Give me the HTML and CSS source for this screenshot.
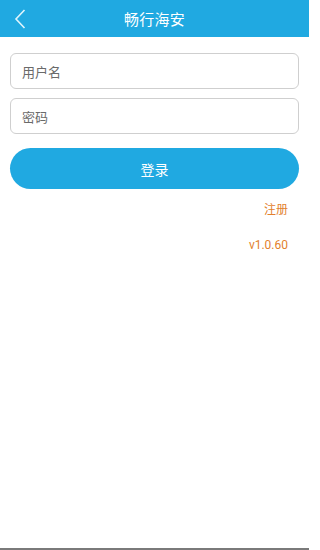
FILE: index.html
```html
<!DOCTYPE html>
<html lang="zh">
<head>
<meta charset="utf-8">
<meta name="viewport" content="width=309">
<title>畅行海安</title>
<link rel="stylesheet" href="styles.css">
</head>
<body>
<div class="page">
  <header class="topbar">
    <span class="back">
      <svg width="12" height="20" viewBox="0 0 12 20"><path d="M10.5 1 L2 10 L10.5 19" fill="none" stroke="#dff4fc" stroke-width="1.6"/></svg>
    </span>
    <h1 class="title">畅行海安</h1>
  </header>
  <main class="content">
    <div class="field"><span class="placeholder">用户名</span></div>
    <div class="field"><span class="placeholder">密码</span></div>
    <button class="login">登录</button>
    <div class="links">
      <span class="register">注册</span>
      <span class="version">v1.0.60</span>
    </div>
  </main>
  <div class="bottom-line"></div>
</div>
</body>
</html>
```
FILE: styles.css
```css
html, body {
  margin: 0;
  padding: 0;
  background: #ffffff;
}
body {
  font-family: "Noto Sans CJK SC", "Noto Sans", sans-serif;
}
.page {
  display: flex;
  flex-direction: column;
  width: 309px;
  height: 550px;
}
.topbar {
  position: relative;
  height: 37px;
  background: #20a9e1;
  display: flex;
  align-items: center;
  justify-content: center;
}
.back {
  position: absolute;
  left: 14px;
  top: 9px;
  width: 12px;
  height: 20px;
  display: block;
}
.back svg { display: block; }
.title {
  margin: 0;
  font-size: 15px;
  font-weight: normal;
  color: #ffffff;
  letter-spacing: 0.3px;
  line-height: 20px;
}
.content {
  flex: 1;
  padding: 16px 10px 0 10px;
  display: flex;
  flex-direction: column;
}
.field {
  height: 34px;
  border: 1px solid #cfcfcf;
  border-radius: 6px;
  display: flex;
  align-items: center;
  padding-left: 11px;
  margin-bottom: 9px;
}
.placeholder {
  font-size: 13px;
  color: #6a6a6a;
}
.login {
  margin-top: 5px;
  height: 41px;
  border: none;
  border-radius: 21px;
  background: #20a9e1;
  color: #ffffff;
  font-family: "Noto Sans CJK SC", sans-serif;
  font-size: 14px;
  padding: 0;
}
.links {
  display: flex;
  flex-direction: column;
  align-items: flex-end;
  padding-right: 11px;
}
.register {
  margin-top: 12px;
  font-size: 12px;
  line-height: 16px;
  color: #e2812d;
}
.version {
  margin-top: 20px;
  font-family: Roboto, "Noto Sans", sans-serif;
  font-size: 12px;
  line-height: 16px;
  color: #e2812d;
}
.bottom-line {
  height: 2px;
  background: #7a7a7a;
}
```
